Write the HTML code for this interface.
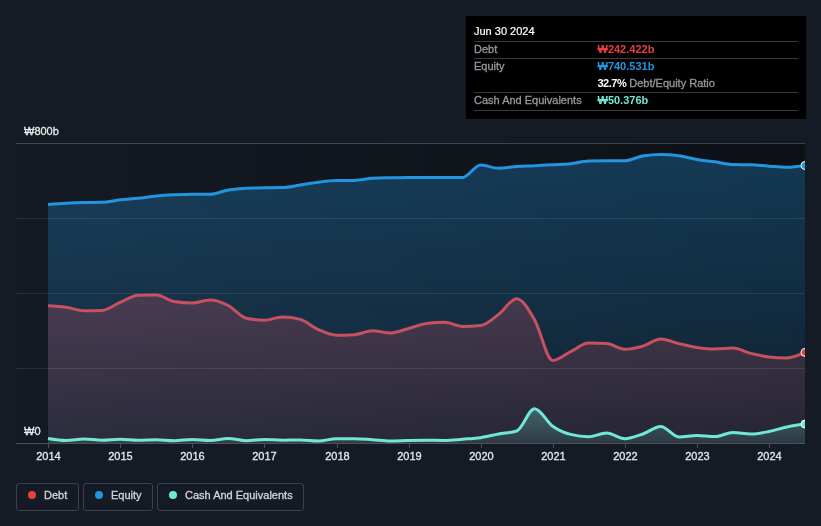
<!DOCTYPE html>
<html><head><meta charset="utf-8"><title>Debt to Equity History</title>
<style>
html,body{margin:0;padding:0;background:#151b24;}
body{width:821px;height:526px;overflow:hidden;position:relative;font-family:"Liberation Sans",sans-serif;}
svg{position:absolute;left:0;top:0;will-change:transform;}
svg text{font-family:"Liberation Sans",sans-serif;}
.tip{will-change:transform;position:absolute;left:466px;top:16px;width:340px;height:103px;background:#000;font-size:11px;color:#fff;}
.tip .row{position:absolute;left:8px;right:8px;height:17px;line-height:17px;white-space:nowrap;}
.tip .row span.l{position:absolute;left:0;color:#96999e;-webkit-text-stroke:0.3px currentColor;}
.tip .row span.v{position:absolute;left:123.5px;font-weight:bold;}
.tip .sep{position:absolute;left:8px;right:8px;height:1px;background:#3b3b3b;}
.legend{will-change:transform;position:absolute;top:483px;height:28px;border:1px solid #3b424e;border-radius:3px;box-sizing:border-box;color:#d3d5d9;font-size:11px;line-height:22px;}
.legend i{position:absolute;top:6.9px;width:8.4px;height:8.4px;border-radius:3.9px;}
.legend b{position:absolute;font-weight:normal;white-space:nowrap;-webkit-text-stroke:0.3px currentColor;}
</style></head><body>
<svg width="821" height="526" viewBox="0 0 821 526">
<defs>
<linearGradient id="gbg" x1="0" x2="1" y1="0" y2="0"><stop offset="0" stop-color="#000" stop-opacity="0"/><stop offset="1" stop-color="#000" stop-opacity="0.37"/></linearGradient>
<linearGradient id="ge" gradientUnits="userSpaceOnUse" x1="0" x2="0" y1="143" y2="443"><stop offset="0" stop-color="#2394df" stop-opacity="0.31"/><stop offset="1" stop-color="#2394df" stop-opacity="0.12"/></linearGradient>
<linearGradient id="gd" gradientUnits="userSpaceOnUse" x1="0" x2="0" y1="293" y2="443"><stop offset="0" stop-color="#d65466" stop-opacity="0.26"/><stop offset="1" stop-color="#e04a55" stop-opacity="0.10"/></linearGradient>
<linearGradient id="gc" x1="0" x2="0" y1="0" y2="1"><stop offset="0" stop-color="#71e7d6" stop-opacity="0.30"/><stop offset="1" stop-color="#71e7d6" stop-opacity="0.10"/></linearGradient>
<clipPath id="cp"><rect x="16" y="140" width="789" height="304"/></clipPath>
</defs>
<rect x="16" y="143" width="789" height="300.5" fill="url(#gbg)"/>
<g clip-path="url(#cp)">
<path d="M48.00,204.40C54.01,203.96 60.02,203.52 66.02,203.20C72.03,202.88 78.04,202.63 84.05,202.50C90.06,202.37 96.06,202.43 102.07,202.30C108.08,202.17 114.09,200.47 120.10,199.80C126.10,199.13 132.11,198.93 138.12,198.30C144.13,197.67 150.13,196.58 156.14,196.00C162.15,195.42 168.16,195.10 174.17,194.80C180.17,194.50 186.18,194.20 192.19,194.20C198.20,194.20 204.21,194.20 210.21,194.20C216.22,194.20 222.23,191.00 228.24,190.00C234.25,189.00 240.25,188.47 246.26,188.20C252.27,187.93 258.28,187.92 264.29,187.80C270.29,187.68 276.30,187.70 282.31,187.50C288.32,187.30 294.33,185.88 300.33,185.00C306.34,184.12 312.35,182.95 318.36,182.20C324.37,181.45 330.37,180.57 336.38,180.50C342.39,180.43 348.40,180.47 354.40,180.40C360.41,180.33 366.42,178.70 372.43,178.30C378.44,177.90 384.44,177.85 390.45,177.70C396.46,177.55 402.47,177.40 408.48,177.40C414.48,177.40 420.49,177.40 426.50,177.40C432.51,177.40 438.52,177.40 444.52,177.40C450.53,177.40 456.54,177.40 462.55,177.40C468.56,177.40 474.56,165.00 480.57,165.00C486.58,165.00 492.59,168.20 498.60,168.20C504.60,168.20 510.61,166.92 516.62,166.50C522.63,166.08 528.63,166.00 534.64,165.70C540.65,165.40 546.66,165.03 552.67,164.70C558.67,164.37 564.68,164.32 570.69,163.70C576.70,163.08 582.71,161.20 588.71,161.00C594.72,160.80 600.73,160.70 606.74,160.70C612.75,160.70 618.75,160.70 624.76,160.70C630.77,160.70 636.78,157.00 642.79,156.00C648.79,155.00 654.80,154.50 660.81,154.50C666.82,154.50 672.83,154.97 678.83,155.80C684.84,156.63 690.85,158.50 696.86,159.50C702.87,160.50 708.87,160.97 714.88,161.80C720.89,162.63 726.90,164.30 732.90,164.50C738.91,164.70 744.92,164.60 750.93,164.80C756.94,165.00 762.94,165.78 768.95,166.20C774.96,166.62 780.97,167.30 786.98,167.30C792.98,167.30 798.99,166.40 805.00,165.50L807.00,443.5L48.00,443.5Z" fill="url(#ge)"/>
<path d="M48.00,305.70C54.01,306.03 60.02,306.37 66.02,307.20C72.03,308.03 78.04,310.70 84.05,310.70C90.06,310.70 96.06,310.60 102.07,310.40C108.08,310.20 114.09,304.92 120.10,302.40C126.10,299.88 132.11,295.50 138.12,295.30C144.13,295.10 150.13,295.00 156.14,295.00C162.15,295.00 168.16,300.50 174.17,301.50C180.17,302.50 186.18,303.00 192.19,303.00C198.20,303.00 204.21,300.00 210.21,300.00C216.22,300.00 222.23,302.45 228.24,305.50C234.25,308.55 240.25,317.03 246.26,318.30C252.27,319.57 258.28,320.20 264.29,320.20C270.29,320.20 276.30,317.00 282.31,317.00C288.32,317.00 294.33,317.80 300.33,319.40C306.34,321.00 312.35,326.97 318.36,329.60C324.37,332.23 330.37,335.20 336.38,335.20C342.39,335.20 348.40,335.03 354.40,334.70C360.41,334.37 366.42,330.70 372.43,330.70C378.44,330.70 384.44,333.00 390.45,333.00C396.46,333.00 402.47,330.08 408.48,328.50C414.48,326.92 420.49,324.30 426.50,323.50C432.51,322.70 438.52,322.30 444.52,322.30C450.53,322.30 456.54,326.40 462.55,326.40C468.56,326.40 474.56,326.10 480.57,325.50C486.58,324.90 492.59,318.87 498.60,314.40C504.60,309.93 510.61,298.70 516.62,298.70C522.63,298.70 528.63,309.70 534.64,320.00C540.65,330.30 546.66,360.50 552.67,360.50C558.67,360.50 564.68,354.50 570.69,351.60C576.70,348.70 582.71,343.10 588.71,343.10C594.72,343.10 600.73,343.27 606.74,343.60C612.75,343.93 618.75,349.30 624.76,349.30C630.77,349.30 636.78,347.82 642.79,346.10C648.79,344.38 654.80,339.00 660.81,339.00C666.82,339.00 672.83,342.20 678.83,343.60C684.84,345.00 690.85,346.50 696.86,347.40C702.87,348.30 708.87,349.00 714.88,349.00C720.89,349.00 726.90,348.10 732.90,348.10C738.91,348.10 744.92,351.92 750.93,353.40C756.94,354.88 762.94,356.33 768.95,357.00C774.96,357.67 780.97,358.00 786.98,358.00C792.98,358.00 798.99,355.20 805.00,352.40L807.00,443.5L48.00,443.5Z" fill="url(#gd)"/>
<path d="M48.00,438.40C54.01,439.40 60.02,440.40 66.02,440.40C72.03,440.40 78.04,438.90 84.05,438.90C90.06,438.90 96.06,440.20 102.07,440.20C108.08,440.20 114.09,439.20 120.10,439.20C126.10,439.20 132.11,440.20 138.12,440.20C144.13,440.20 150.13,439.70 156.14,439.70C162.15,439.70 168.16,440.70 174.17,440.70C180.17,440.70 186.18,439.40 192.19,439.40C198.20,439.40 204.21,440.40 210.21,440.40C216.22,440.40 222.23,438.40 228.24,438.40C234.25,438.40 240.25,440.70 246.26,440.70C252.27,440.70 258.28,439.40 264.29,439.40C270.29,439.40 276.30,440.20 282.31,440.20C288.32,440.20 294.33,440.00 300.33,440.00C306.34,440.00 312.35,441.00 318.36,441.00C324.37,441.00 330.37,438.70 336.38,438.70C342.39,438.70 348.40,438.70 354.40,438.70C360.41,438.70 366.42,439.32 372.43,439.70C378.44,440.08 384.44,441.00 390.45,441.00C396.46,441.00 402.47,440.53 408.48,440.40C414.48,440.27 420.49,440.20 426.50,440.20C432.51,440.20 438.52,440.40 444.52,440.40C450.53,440.40 456.54,439.65 462.55,439.20C468.56,438.75 474.56,438.57 480.57,437.70C486.58,436.83 492.59,435.12 498.60,434.00C504.60,432.88 510.61,433.00 516.62,431.00C522.63,429.00 528.63,408.70 534.64,408.70C540.65,408.70 546.66,421.92 552.67,426.20C558.67,430.48 564.68,432.87 570.69,434.40C576.70,435.93 582.71,436.70 588.71,436.70C594.72,436.70 600.73,433.00 606.74,433.00C612.75,433.00 618.75,438.70 624.76,438.70C630.77,438.70 636.78,436.05 642.79,434.00C648.79,431.95 654.80,426.40 660.81,426.40C666.82,426.40 672.83,436.90 678.83,436.90C684.84,436.90 690.85,435.40 696.86,435.40C702.87,435.40 708.87,436.60 714.88,436.60C720.89,436.60 726.90,432.40 732.90,432.40C738.91,432.40 744.92,434.00 750.93,434.00C756.94,434.00 762.94,432.67 768.95,431.50C774.96,430.33 780.97,428.25 786.98,427.00C792.98,425.75 798.99,424.88 805.00,424.00L807.00,443.5L48.00,443.5Z" fill="url(#gc)"/>
<g stroke="#ffffff" stroke-opacity="0.085" stroke-width="1" shape-rendering="crispEdges">
<line x1="16" x2="805" y1="143.5" y2="143.5" stroke-opacity="0.2"/>
<line x1="16" x2="805" y1="218.5" y2="218.5"/>
<line x1="16" x2="805" y1="293.5" y2="293.5"/>
<line x1="16" x2="805" y1="368.5" y2="368.5"/>
</g>
<path d="M48.00,204.40C54.01,203.96 60.02,203.52 66.02,203.20C72.03,202.88 78.04,202.63 84.05,202.50C90.06,202.37 96.06,202.43 102.07,202.30C108.08,202.17 114.09,200.47 120.10,199.80C126.10,199.13 132.11,198.93 138.12,198.30C144.13,197.67 150.13,196.58 156.14,196.00C162.15,195.42 168.16,195.10 174.17,194.80C180.17,194.50 186.18,194.20 192.19,194.20C198.20,194.20 204.21,194.20 210.21,194.20C216.22,194.20 222.23,191.00 228.24,190.00C234.25,189.00 240.25,188.47 246.26,188.20C252.27,187.93 258.28,187.92 264.29,187.80C270.29,187.68 276.30,187.70 282.31,187.50C288.32,187.30 294.33,185.88 300.33,185.00C306.34,184.12 312.35,182.95 318.36,182.20C324.37,181.45 330.37,180.57 336.38,180.50C342.39,180.43 348.40,180.47 354.40,180.40C360.41,180.33 366.42,178.70 372.43,178.30C378.44,177.90 384.44,177.85 390.45,177.70C396.46,177.55 402.47,177.40 408.48,177.40C414.48,177.40 420.49,177.40 426.50,177.40C432.51,177.40 438.52,177.40 444.52,177.40C450.53,177.40 456.54,177.40 462.55,177.40C468.56,177.40 474.56,165.00 480.57,165.00C486.58,165.00 492.59,168.20 498.60,168.20C504.60,168.20 510.61,166.92 516.62,166.50C522.63,166.08 528.63,166.00 534.64,165.70C540.65,165.40 546.66,165.03 552.67,164.70C558.67,164.37 564.68,164.32 570.69,163.70C576.70,163.08 582.71,161.20 588.71,161.00C594.72,160.80 600.73,160.70 606.74,160.70C612.75,160.70 618.75,160.70 624.76,160.70C630.77,160.70 636.78,157.00 642.79,156.00C648.79,155.00 654.80,154.50 660.81,154.50C666.82,154.50 672.83,154.97 678.83,155.80C684.84,156.63 690.85,158.50 696.86,159.50C702.87,160.50 708.87,160.97 714.88,161.80C720.89,162.63 726.90,164.30 732.90,164.50C738.91,164.70 744.92,164.60 750.93,164.80C756.94,165.00 762.94,165.78 768.95,166.20C774.96,166.62 780.97,167.30 786.98,167.30C792.98,167.30 798.99,166.40 805.00,165.50" fill="none" stroke="#2394df" stroke-width="3" stroke-linejoin="round"/>
<path d="M48.00,305.70C54.01,306.03 60.02,306.37 66.02,307.20C72.03,308.03 78.04,310.70 84.05,310.70C90.06,310.70 96.06,310.60 102.07,310.40C108.08,310.20 114.09,304.92 120.10,302.40C126.10,299.88 132.11,295.50 138.12,295.30C144.13,295.10 150.13,295.00 156.14,295.00C162.15,295.00 168.16,300.50 174.17,301.50C180.17,302.50 186.18,303.00 192.19,303.00C198.20,303.00 204.21,300.00 210.21,300.00C216.22,300.00 222.23,302.45 228.24,305.50C234.25,308.55 240.25,317.03 246.26,318.30C252.27,319.57 258.28,320.20 264.29,320.20C270.29,320.20 276.30,317.00 282.31,317.00C288.32,317.00 294.33,317.80 300.33,319.40C306.34,321.00 312.35,326.97 318.36,329.60C324.37,332.23 330.37,335.20 336.38,335.20C342.39,335.20 348.40,335.03 354.40,334.70C360.41,334.37 366.42,330.70 372.43,330.70C378.44,330.70 384.44,333.00 390.45,333.00C396.46,333.00 402.47,330.08 408.48,328.50C414.48,326.92 420.49,324.30 426.50,323.50C432.51,322.70 438.52,322.30 444.52,322.30C450.53,322.30 456.54,326.40 462.55,326.40C468.56,326.40 474.56,326.10 480.57,325.50C486.58,324.90 492.59,318.87 498.60,314.40C504.60,309.93 510.61,298.70 516.62,298.70C522.63,298.70 528.63,309.70 534.64,320.00C540.65,330.30 546.66,360.50 552.67,360.50C558.67,360.50 564.68,354.50 570.69,351.60C576.70,348.70 582.71,343.10 588.71,343.10C594.72,343.10 600.73,343.27 606.74,343.60C612.75,343.93 618.75,349.30 624.76,349.30C630.77,349.30 636.78,347.82 642.79,346.10C648.79,344.38 654.80,339.00 660.81,339.00C666.82,339.00 672.83,342.20 678.83,343.60C684.84,345.00 690.85,346.50 696.86,347.40C702.87,348.30 708.87,349.00 714.88,349.00C720.89,349.00 726.90,348.10 732.90,348.10C738.91,348.10 744.92,351.92 750.93,353.40C756.94,354.88 762.94,356.33 768.95,357.00C774.96,357.67 780.97,358.00 786.98,358.00C792.98,358.00 798.99,355.20 805.00,352.40" fill="none" stroke="#c75061" stroke-width="3" stroke-linejoin="round"/>
<path d="M48.00,438.40C54.01,439.40 60.02,440.40 66.02,440.40C72.03,440.40 78.04,438.90 84.05,438.90C90.06,438.90 96.06,440.20 102.07,440.20C108.08,440.20 114.09,439.20 120.10,439.20C126.10,439.20 132.11,440.20 138.12,440.20C144.13,440.20 150.13,439.70 156.14,439.70C162.15,439.70 168.16,440.70 174.17,440.70C180.17,440.70 186.18,439.40 192.19,439.40C198.20,439.40 204.21,440.40 210.21,440.40C216.22,440.40 222.23,438.40 228.24,438.40C234.25,438.40 240.25,440.70 246.26,440.70C252.27,440.70 258.28,439.40 264.29,439.40C270.29,439.40 276.30,440.20 282.31,440.20C288.32,440.20 294.33,440.00 300.33,440.00C306.34,440.00 312.35,441.00 318.36,441.00C324.37,441.00 330.37,438.70 336.38,438.70C342.39,438.70 348.40,438.70 354.40,438.70C360.41,438.70 366.42,439.32 372.43,439.70C378.44,440.08 384.44,441.00 390.45,441.00C396.46,441.00 402.47,440.53 408.48,440.40C414.48,440.27 420.49,440.20 426.50,440.20C432.51,440.20 438.52,440.40 444.52,440.40C450.53,440.40 456.54,439.65 462.55,439.20C468.56,438.75 474.56,438.57 480.57,437.70C486.58,436.83 492.59,435.12 498.60,434.00C504.60,432.88 510.61,433.00 516.62,431.00C522.63,429.00 528.63,408.70 534.64,408.70C540.65,408.70 546.66,421.92 552.67,426.20C558.67,430.48 564.68,432.87 570.69,434.40C576.70,435.93 582.71,436.70 588.71,436.70C594.72,436.70 600.73,433.00 606.74,433.00C612.75,433.00 618.75,438.70 624.76,438.70C630.77,438.70 636.78,436.05 642.79,434.00C648.79,431.95 654.80,426.40 660.81,426.40C666.82,426.40 672.83,436.90 678.83,436.90C684.84,436.90 690.85,435.40 696.86,435.40C702.87,435.40 708.87,436.60 714.88,436.60C720.89,436.60 726.90,432.40 732.90,432.40C738.91,432.40 744.92,434.00 750.93,434.00C756.94,434.00 762.94,432.67 768.95,431.50C774.96,430.33 780.97,428.25 786.98,427.00C792.98,425.75 798.99,424.88 805.00,424.00" fill="none" stroke="#71e7d6" stroke-width="3" stroke-linejoin="round"/>
<circle cx="805" cy="165.5" r="4" fill="#2394df" stroke="#fff" stroke-width="1"/>
<circle cx="805" cy="352.4" r="4" fill="#e64141" stroke="#fff" stroke-width="1"/>
<circle cx="805" cy="424" r="4" fill="#71e7d6" stroke="#fff" stroke-width="1"/>
</g>
<g stroke="#4a4f58" stroke-width="1" shape-rendering="crispEdges">
<line x1="16" x2="805" y1="443.5" y2="443.5"/>
<line x1="48.5" x2="48.5" y1="443" y2="448"/><line x1="120.5" x2="120.5" y1="443" y2="448"/><line x1="192.5" x2="192.5" y1="443" y2="448"/><line x1="264.5" x2="264.5" y1="443" y2="448"/><line x1="337.5" x2="337.5" y1="443" y2="448"/><line x1="409.5" x2="409.5" y1="443" y2="448"/><line x1="481.5" x2="481.5" y1="443" y2="448"/><line x1="553.5" x2="553.5" y1="443" y2="448"/><line x1="625.5" x2="625.5" y1="443" y2="448"/><line x1="697.5" x2="697.5" y1="443" y2="448"/><line x1="769.5" x2="769.5" y1="443" y2="448"/>
</g>
<g fill="#e6e7e9" stroke="#e6e7e9" stroke-width="0.3" font-size="11" text-anchor="middle"><text x="48.5" y="460">2014</text><text x="120.5" y="460">2015</text><text x="192.5" y="460">2016</text><text x="264.5" y="460">2017</text><text x="337.5" y="460">2018</text><text x="409.5" y="460">2019</text><text x="481.5" y="460">2020</text><text x="553.5" y="460">2021</text><text x="625.5" y="460">2022</text><text x="697.5" y="460">2023</text><text x="769.5" y="460">2024</text></g>
<g fill="#e6e7e9" stroke="#e6e7e9" stroke-width="0.3" font-size="11">
<text x="24" y="135">₩800b</text>
<text x="24" y="435">₩0</text>
</g>
</svg>
<div class="tip">
<div class="row" style="top:7px"><span class="l" style="color:#fff;-webkit-text-stroke-width:0.2px">Jun 30 2024</span></div>
<div class="sep" style="top:25px"></div>
<div class="row" style="top:25px"><span class="l">Debt</span><span class="v" style="color:#e64141">₩242.422b</span></div>
<div class="sep" style="top:42px"></div>
<div class="row" style="top:42px"><span class="l">Equity</span><span class="v" style="color:#2394df">₩740.531b</span></div>
<div class="row" style="top:59px"><span class="v" style="color:#fff"><span style="letter-spacing:-0.5px">32.7%</span> <span style="color:#96999e;font-weight:normal;-webkit-text-stroke:0.3px currentColor">Debt/Equity Ratio</span></span></div>
<div class="sep" style="top:76px"></div>
<div class="row" style="top:76px"><span class="l">Cash And Equivalents</span><span class="v" style="color:#71e7d6">₩50.376b</span></div>
<div class="sep" style="top:94px"></div>
</div>
<div class="legend" style="left:16px;width:63px"><i style="left:10.8px;background:#e64141"></i><b style="left:27px">Debt</b></div>
<div class="legend" style="left:83px;width:70px"><i style="left:10.8px;background:#2394df"></i><b style="left:27px">Equity</b></div>
<div class="legend" style="left:157px;width:147px"><i style="left:10.8px;background:#71e7d6"></i><b style="left:27px">Cash And Equivalents</b></div>
</body></html>
